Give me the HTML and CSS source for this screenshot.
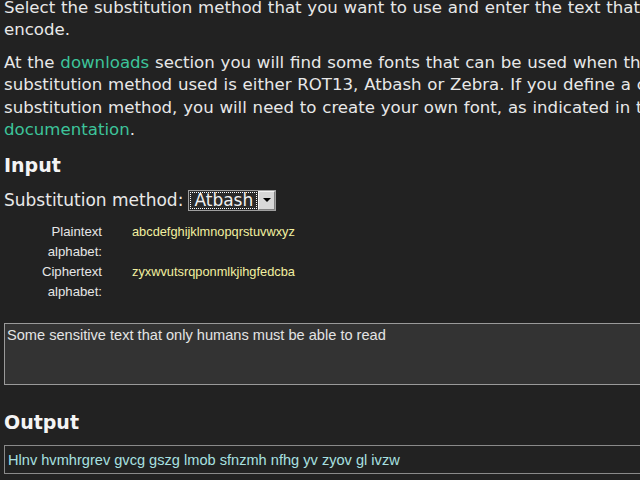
FILE: index.html
```html
<!DOCTYPE html>
<html>
<head>
<meta charset="utf-8">
<link rel="stylesheet" href="styles.css">
</head>
<body>
<main class="page">
  <p class="intro first">Select the substitution method that you want to use and enter the text that you want to<br>encode.</p>
  <p class="intro">At the <a href="#">downloads</a> section you will find some fonts that can be used when the<br>substitution method used is either ROT13, Atbash or Zebra. If you define a custom<br>substitution method, you will need to create your own font, as indicated in the<br><a href="#">documentation</a>.</p>
  <h2 class="heading">Input</h2>
  <div class="method-row">
    <span class="method-label">Substitution method:</span>
    <span class="select">
      <span class="select-value">Atbash</span>
      <span class="select-btn"><span class="tri"></span></span>
    </span>
  </div>
  <div class="alpha-grid">
    <div class="alpha-label">Plaintext alphabet:</div>
    <div class="alpha-value">abcdefghijklmnopqrstuvwxyz</div>
    <div class="alpha-label">Ciphertext alphabet:</div>
    <div class="alpha-value">zyxwvutsrqponmlkjihgfedcba</div>
  </div>
  <div class="textarea">Some sensitive text that only humans must be able to read</div>
  <h2 class="heading out-heading">Output</h2>
  <div class="output">Hlnv hvmhrgrev gvcg gszg lmob sfnzmh nfhg yv zyov gl ivzw</div>
</main>
</body>
</html>
```

FILE: styles.css
```css
html, body {
  margin: 0;
  padding: 0;
  background: #222222;
  overflow: hidden;
}
.page {
  padding: 0 4px;
  font-family: "DejaVu Sans", Verdana, sans-serif;
  font-size: 16.6px;
  word-spacing: 0.5px;
  color: #e8e8e8;
  width: 900px;
}
.intro {
  margin: 0 0 10px 0;
  line-height: 22.4px;
  white-space: nowrap;
}
.intro.first {
  margin-top: -3px;
}
.intro a {
  color: #3dc49a;
  text-decoration: none;
}
.heading {
  font-size: 19px;
  font-weight: bold;
  margin: 12px 0 11px 0;
  color: #f4f4f4;
  line-height: 24px;
  word-spacing: 0;
}
.method-row {
  display: flex;
  align-items: center;
  gap: 5px;
  height: 24px;
  font-size: 17px;
  word-spacing: 0;
}
.select {
  display: inline-flex;
  align-items: stretch;
  height: 21px;
  width: 88px;
  border: 1px solid #a0a0a0;
  box-sizing: border-box;
  background: #2a2a2a;
}
.select-value {
  flex: 1;
  border: 1px dotted #ffffff;
  margin: 1px;
  padding: 0 3px;
  line-height: 15px;
  font-size: 17px;
  color: #f0f0f0;
  font-family: "DejaVu Sans", sans-serif;
}
.select-btn {
  width: 15px;
  background: #d8d8d8;
  border: 1px solid #f4f4f4;
  border-right-color: #808080;
  border-bottom-color: #808080;
  display: flex;
  align-items: center;
  justify-content: center;
}
.tri {
  width: 0;
  height: 0;
  border-left: 4px solid transparent;
  border-right: 4px solid transparent;
  border-top: 4px solid #000;
}
.alpha-grid {
  display: grid;
  grid-template-columns: 98px auto;
  column-gap: 30px;
  row-gap: 1px;
  margin-top: 10px;
  font-family: "Liberation Sans", Arial, sans-serif;
  font-size: 12.8px;
  line-height: 19.5px;
  width: 400px;
  word-spacing: 0;
}
.alpha-label {
  text-align: right;
  color: #e6e6e6;
  padding-left: 30px;
  font-size: 13.2px;
}
.alpha-value {
  color: #f2f0a0;
}
.textarea {
  margin-top: 22px;
  height: 62px;
  box-sizing: border-box;
  border: 1px solid #9a9a9a;
  background: #333333;
  padding: 3px 2px;
  font-family: "Liberation Sans", Arial, sans-serif;
  font-size: 14.6px;
  color: #e4e4e4;
  width: 700px;
  word-spacing: 0;
}
.out-heading {
  margin-top: 25px;
  margin-bottom: 11px;
}
.output {
  height: 29px;
  box-sizing: border-box;
  border: 1px solid #8a8a8a;
  background: #222222;
  padding: 6px 3px 4px;
  font-family: "Liberation Sans", Arial, sans-serif;
  font-size: 14.6px;
  color: #a8e0e0;
  width: 700px;
  margin-top: 0;
  word-spacing: 0;
}
```
